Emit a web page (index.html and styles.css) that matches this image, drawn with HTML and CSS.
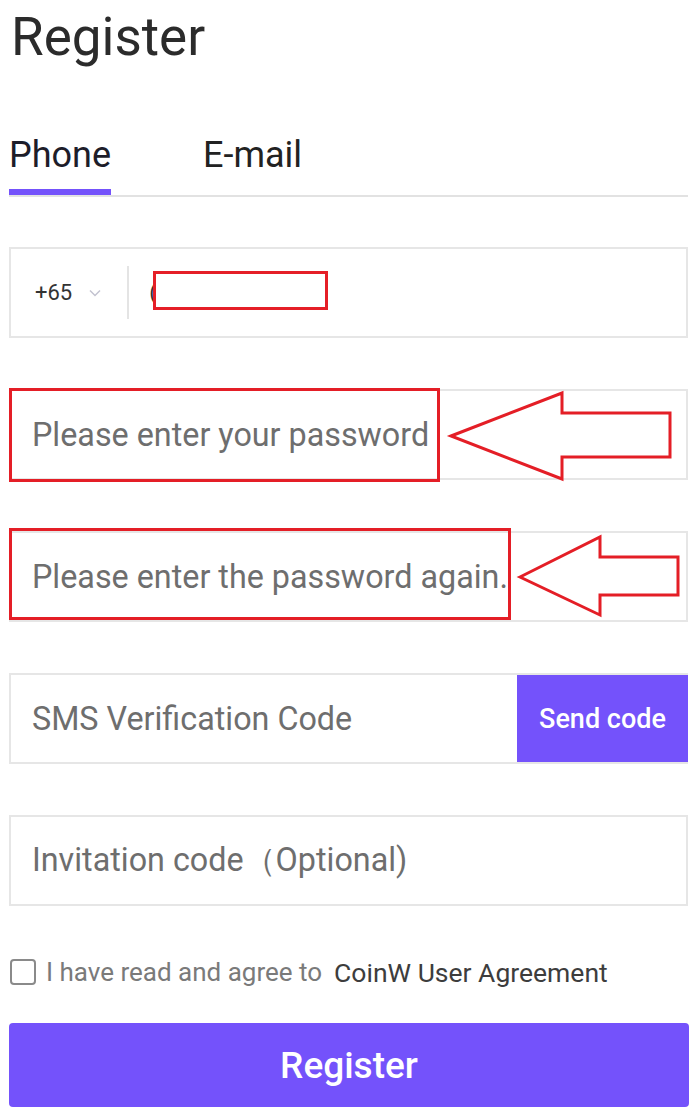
FILE: index.html
```html
<!DOCTYPE html>
<html lang="en">
<head>
<meta charset="utf-8">
<title>Register</title>
<link rel="stylesheet" href="styles.css">
</head>
<body>
<div class="page">
  <h1 class="title">Register</h1>
  <div class="tabs">
    <div class="tab active">Phone</div>
    <div class="tab">E-mail</div>
  </div>

  <div class="field phone">
    <span class="cc">+65</span>
    <svg class="chev" width="12" height="8" viewBox="0 0 12 8"><path d="M1 1.5 L6 6.5 L11 1.5" fill="none" stroke="#c3c3d0" stroke-width="1.5"/></svg>
    <span class="sep"></span>
    <span class="paren">(</span>
    <span class="mask"></span>
  </div>

  <div class="field">
    <span class="ph">Please enter your password</span>
    <span class="note note-1"></span>
    <svg class="arrow" width="690" height="100" viewBox="0 0 690 100"><polygon points="442,47 553,4 553,24 661,24 661,68 553,68 553,90" fill="none" stroke="#e41e26" stroke-width="3"/></svg>
  </div>

  <div class="field">
    <span class="ph">Please enter the password again.</span>
    <span class="note note-2"></span>
    <svg class="arrow" width="690" height="100" viewBox="0 0 690 100"><polygon points="511,46 591,6 591,26 669,26 669,64 591,64 591,84" fill="none" stroke="#e41e26" stroke-width="3"/></svg>
  </div>

  <div class="field sms">
    <span class="ph">SMS Verification Code</span>
    <button class="send">Send code</button>
  </div>

  <div class="field">
    <span class="ph">Invitation code（Optional)</span>
  </div>

  <div class="agree">
    <span class="box"></span>
    <span class="agree-text">I have read and agree to</span>
    <span class="agree-link">CoinW User Agreement</span>
  </div>

  <button class="submit">Register</button>
</div>
</body>
</html>
```

FILE: styles.css
```css
* { box-sizing: border-box; }
html, body { margin: 0; padding: 0; background: #fff; }
body { font-family: Roboto, "Liberation Sans", sans-serif; }

.page {
  width: 697px;
  padding: 7px 9px 0 9px;
}

.title {
  margin: 0;
  font-size: 53px;
  line-height: 60px;
  font-weight: 400;
  color: #2b2b2b;
  padding-left: 2px;
}

.tabs {
  margin-top: 68px;
  display: flex;
  gap: 92px;
  border-bottom: 2px solid #e2e2e2;
  width: 679px;
}
.tab {
  font-size: 36px;
  line-height: 40px;
  color: #222;
  padding-bottom: 14px;
  border-bottom: 6px solid transparent;
}
.tab.active { border-bottom-color: #7452fb; color: #1d1d2a; }

.field {
  position: relative;
  margin-top: 51px;
  height: 91px;
  width: 679px;
  border: 2px solid #e6e6e6;
  display: flex;
  align-items: center;
  padding-left: 21px;
}
.field.phone { margin-top: 50px; padding-left: 24px; }

.cc { font-size: 22px; color: #333; }
.chev { margin-left: 17px; }
.sep { width: 2px; height: 53px; background: #e4e4e4; margin-left: 26px; }
.paren { font-size: 22px; color: #333; margin-left: 20px; }
.mask {
  position: absolute;
  left: 142px;
  top: 22px;
  width: 175px;
  height: 39px;
  border: 3px solid #e51f27;
  background: #fff;
}

.ph { font-size: 32.3px; color: #6e6e6e; white-space: pre; }

.note {
  position: absolute;
  left: -2px;
  border: 3px solid #e41e26;
}
.note-1 { top: -3px; width: 431px; height: 94px; }
.note-2 { top: -5px; width: 502px; height: 92px; }

.arrow {
  position: absolute;
  left: -2px;
  top: -2px;
  overflow: visible;
}

.sms { padding-right: 0; }
.send {
  margin-left: auto;
  margin-right: -2px;
  align-self: stretch;
  width: 171px;
  border: none;
  background: #7452fb;
  color: #fff;
  font-family: Roboto, "Liberation Sans", sans-serif;
  font-size: 27px;
  font-weight: 500;
  padding: 0;
}

.agree {
  margin-top: 53px;
  height: 26px;
  display: flex;
  align-items: center;
}
.box {
  width: 26px;
  height: 26px;
  border: 2px solid #8a8a8a;
  border-radius: 4px;
  margin-left: 1px;
}
.agree-text { font-size: 26px; color: #7a7a7a; margin-left: 10px; }
.agree-link { font-size: 26.5px; color: #3d3d3d; margin-left: 12px; font-weight: 400; }

.submit {
  display: block;
  margin-top: 38px;
  width: 680px;
  height: 84px;
  border: none;
  border-radius: 4px;
  background: #7452fb;
  color: #fff;
  font-family: Roboto, "Liberation Sans", sans-serif;
  font-size: 37px;
  font-weight: 500;
}
```
